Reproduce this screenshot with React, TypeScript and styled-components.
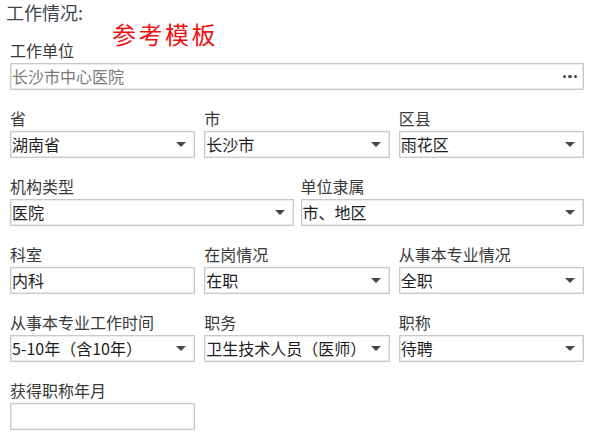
import styled, { createGlobalStyle } from "styled-components";

const GlobalStyle = createGlobalStyle`
  html, body {
    margin: 0;
    padding: 0;
    background: #ffffff;
  }
  body {
    font-family: "Noto Sans CJK SC", "Noto Sans", sans-serif;
  }
`;

const Page = styled.div`
  position: relative;
  width: 600px;
  height: 434px;
  box-sizing: border-box;
  padding: 0 16px 0 10px;
  display: flex;
  flex-direction: column;
  gap: 18px;
  overflow: hidden;
`;

const Title = styled.div`
  margin-left: -4px;
  margin-bottom: -2px;
  height: 24px;
  line-height: 24px;
  font-size: 18px;
  color: #3d4650;
`;

// red "reference template" stamp laid over the form
const Stamp = styled.div`
  position: absolute;
  left: 112px;
  top: 19px;
  font-size: 24px;
  line-height: 30px;
  letter-spacing: 2.5px;
  color: #ee1111;
`;

const Row = styled.div<{ $cols: number; $gap: number }>`
  display: grid;
  grid-template-columns: repeat(${(p) => p.$cols}, 1fr);
  column-gap: ${(p) => p.$gap}px;
`;

const Field = styled.div`
  display: flex;
  flex-direction: column;
  gap: 3px;
  min-width: 0;
`;

const Label = styled.div`
  height: 20px;
  line-height: 20px;
  font-size: 16px;
  color: #3a3a3a;
  white-space: nowrap;
`;

const Box = styled.div`
  position: relative;
  height: 27px;
  box-sizing: border-box;
  border: 1px solid #c9c9c9;
  box-shadow: inset 0 0 0 1px #ececec;
  background: #ffffff;
  display: flex;
  align-items: center;
  padding: 0 8px 0 1px;
`;

const Value = styled.span<{ $muted?: boolean }>`
  flex: 1;
  font-size: 16px;
  line-height: 25px;
  color: ${(p) => (p.$muted ? "#7a7a7a" : "#1e1e1e")};
  white-space: nowrap;
  overflow: hidden;
`;

const Caret = styled.span`
  width: 0;
  height: 0;
  border-left: 5px solid transparent;
  border-right: 5px solid transparent;
  border-top: 5px solid #474747;
  margin-left: 4px;
`;

const More = styled.span`
  display: flex;
  gap: 2px;
  margin-right: -2px;

  i {
    width: 3.5px;
    height: 3.5px;
    border-radius: 50%;
    background: #4a4a4a;
  }
`;

type Item = { label: string; value?: string; kind: "select" | "input" };

function FormField({ label, value = "", kind }: Item) {
  return (
    <Field>
      <Label>{label}</Label>
      <Box>
        <Value>{value}</Value>
        {kind === "select" && <Caret />}
      </Box>
    </Field>
  );
}

const rows: { cols: number; gap: number; items: Item[] }[] = [
  {
    cols: 3,
    gap: 9,
    items: [
      { label: "省", value: "湖南省", kind: "select" },
      { label: "市", value: "长沙市", kind: "select" },
      { label: "区县", value: "雨花区", kind: "select" },
    ],
  },
  {
    cols: 2,
    gap: 7,
    items: [
      { label: "机构类型", value: "医院", kind: "select" },
      { label: "单位隶属", value: "市、地区", kind: "select" },
    ],
  },
  {
    cols: 3,
    gap: 9,
    items: [
      { label: "科室", value: "内科", kind: "input" },
      { label: "在岗情况", value: "在职", kind: "select" },
      { label: "从事本专业情况", value: "全职", kind: "select" },
    ],
  },
  {
    cols: 3,
    gap: 9,
    items: [
      { label: "从事本专业工作时间", value: "5-10年（含10年）", kind: "select" },
      { label: "职务", value: "卫生技术人员（医师）", kind: "select" },
      { label: "职称", value: "待聘", kind: "select" },
    ],
  },
  {
    cols: 3,
    gap: 9,
    items: [{ label: "获得职称年月", kind: "input" }],
  },
];

export default function App() {
  return (
    <>
      <GlobalStyle />
      <Page>
        <Title>工作情况:</Title>
        <Stamp>参考模板</Stamp>
        <Field>
          <Label>工作单位</Label>
          <Box>
            <Value $muted>长沙市中心医院</Value>
            <More>
              <i />
              <i />
              <i />
            </More>
          </Box>
        </Field>
        {rows.map((row, idx) => (
          <Row key={idx} $cols={row.cols} $gap={row.gap}>
            {row.items.map((item) => (
              <FormField key={item.label} {...item} />
            ))}
          </Row>
        ))}
      </Page>
    </>
  );
}
